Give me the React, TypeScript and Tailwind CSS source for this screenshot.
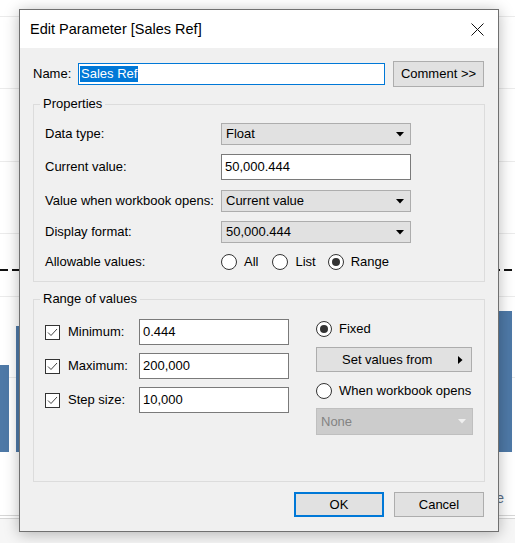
import type { ReactNode } from 'react'

const FONT = "font-['Liberation_Sans','Arial',sans-serif]"

function Radio({ checked }: { checked?: boolean }) {
  return (
    <span className="flex h-[16px] w-[16px] shrink-0 items-center justify-center rounded-full border border-[#333] bg-white">
      {checked && <span className="h-[8px] w-[8px] rounded-full bg-[#333]" />}
    </span>
  )
}

function Checkbox() {
  return (
    <span className="flex h-[15px] w-[15px] shrink-0 items-center justify-center border border-[#333] bg-white">
      <svg width="11" height="9" viewBox="0 0 11 9" fill="none">
        <path d="M1 4.5 L4 7.5 L10 1" stroke="#444" strokeWidth="1" />
      </svg>
    </span>
  )
}

function DownArrow({ color = '#000' }: { color?: string }) {
  return (
    <svg width="8" height="5" viewBox="0 0 8 5">
      <path d="M0 0 H8 L4 4.5 Z" fill={color} />
    </svg>
  )
}

function Select({ value }: { value: string }) {
  return (
    <div className="flex h-[22px] w-[190px] items-center justify-between border border-[#adadad] bg-[#e1e1e1] pl-[4px] pr-[6px]">
      <span>{value}</span>
      <DownArrow />
    </div>
  )
}

function TextBox({ value, width }: { value: string; width: string }) {
  return (
    <div className={`flex h-[26px] items-center border border-[#7a7a7a] bg-white pl-[3px] ${width}`}>
      {value}
    </div>
  )
}

function Group({ title, children, className = '' }: { title: string; children: ReactNode; className?: string }) {
  return (
    <fieldset className={`border border-[#dcdcdc] pl-[6px] pr-[6px] ${className}`}>
      <legend className="h-[16px] px-[3px] leading-[16px]">{title}</legend>
      {children}
    </fieldset>
  )
}

function PropRow({ label, children, h = 'h-[22px]', mt = '' }: { label: string; children: ReactNode; h?: string; mt?: string }) {
  return (
    <div className={`flex items-center pl-[5px] ${h} ${mt}`}>
      <span className="w-[176px] shrink-0">{label}</span>
      {children}
    </div>
  )
}

function RangeRow({ label, value, mt = '' }: { label: string; value: string; mt?: string }) {
  return (
    <div className={`flex h-[26px] items-center ${mt}`}>
      <Checkbox />
      <span className="ml-[8px] w-[71px]">{label}</span>
      <TextBox value={value} width="w-[150px]" />
    </div>
  )
}

function Background() {
  return (
    <div className="flex h-full flex-col">
      <div className="h-[17px] shrink-0 border-b border-[#ebebeb]" />
      <div className="h-[72px] shrink-0 border-b border-[#ebebeb]" />
      <div className="h-[73px] shrink-0 border-b border-[#ebebeb]" />
      <div className="h-[72px] shrink-0 border-b border-[#ebebeb]" />
      <div className="h-[35px] shrink-0" />
      <div className="h-[2px] shrink-0 bg-[repeating-linear-gradient(90deg,#111_0_8px,transparent_8px_12px)]" />
      <div className="h-[26px] shrink-0 border-b border-[#ebebeb]" />
      <div className="h-[81px] shrink-0 border-b border-[#ebebeb]" />
      <div className="h-[138px] shrink-0 border-b border-[#d6d6d6]" />
      <div className="h-[3px] shrink-0 border-b border-[#d6d6d6]" />
      <div className="flex-1 bg-[#f6f6f6]" />
    </div>
  )
}

export default function App() {
  return (
    <div className={`relative h-[543px] w-[515px] overflow-hidden bg-white text-[13px] text-black ${FONT}`}>
      <Background />

      {/* bars of the chart behind the dialog */}
      <div className="absolute left-0 top-[365px] h-[87px] w-[9px] bg-[#4e79a7]" />
      <div className="absolute left-[16px] top-[326px] h-[126px] w-[10px] bg-[#4e79a7]" />
      <div className="absolute left-[490px] top-[311px] h-[141px] w-[22px] bg-[#4e79a7]" />
      <span className="absolute left-[476px] top-[488px] text-[14px] text-[#5a6f8a]">Sale</span>

      <div className="absolute left-[19px] top-[9px] flex h-[523px] w-[480px] flex-col border border-[#707070] bg-[#f0f0f0] shadow-[0_2px_14px_rgba(0,0,0,0.28)]">
        <div className="flex h-[38px] shrink-0 items-center justify-between bg-white pl-[10px] pr-[14px] pt-[1px]">
          <span className="text-[14.5px]">Edit Parameter [Sales Ref]</span>
          <svg width="13" height="13" viewBox="0 0 13 13">
            <path d="M0.5 0.5 L12.5 12.5 M12.5 0.5 L0.5 12.5" stroke="#111" strokeWidth="1" />
          </svg>
        </div>

        <div className="flex flex-1 flex-col px-[13px] pt-[13px]">
          <div className="flex h-[26px] items-center">
            <span className="w-[45px] shrink-0">Name:</span>
            <div className="flex h-[22px] w-[307px] items-center border border-[#0078d7] bg-white pl-[1px]">
              <span className="bg-[#0078d7] px-[1px] leading-[16px] text-white">Sales Ref</span>
            </div>
            <button className="ml-[8px] flex h-[26px] w-[91px] items-center justify-center border border-[#adadad] bg-[#e1e1e1]">
              Comment &gt;&gt;
            </button>
          </div>

          <Group title="Properties" className="mt-[9px] pb-[11px]">
            <PropRow label="Data type:" mt="mt-[11px]">
              <Select value="Float" />
            </PropRow>
            <PropRow label="Current value:" h="h-[26px]" mt="mt-[9px]">
              <TextBox value="50,000.444" width="w-[190px]" />
            </PropRow>
            <PropRow label="Value when workbook opens:" mt="mt-[10px]">
              <Select value="Current value" />
            </PropRow>
            <PropRow label="Display format:" mt="mt-[9px]">
              <Select value="50,000.444" />
            </PropRow>
            <PropRow label="Allowable values:" h="h-[16px]" mt="mt-[11px]">
              <div className="flex items-center">
                <Radio />
                <span className="ml-[7px]">All</span>
                <span className="ml-[14px]"><Radio /></span>
                <span className="ml-[7px]">List</span>
                <span className="ml-[12px]"><Radio checked /></span>
                <span className="ml-[7px]">Range</span>
              </div>
            </PropRow>
          </Group>

          <Group title="Range of values" className="mt-[9px] h-[191px]">
            <div className="mt-[12px] flex pl-[5px]">
              <div className="flex flex-col">
                <RangeRow label="Minimum:" value="0.444" />
                <RangeRow label="Maximum:" value="200,000" mt="mt-[8px]" />
                <RangeRow label="Step size:" value="10,000" mt="mt-[8px]" />
              </div>
              <div className="ml-[27px] flex w-[157px] flex-col">
                <div className="flex h-[20px] items-center">
                  <Radio checked />
                  <span className="ml-[7px]">Fixed</span>
                </div>
                <div className="mt-[8px] flex h-[25px] w-[156px] items-center border border-[#adadad] bg-[#e1e1e1] pl-[25px] pr-[8px]">
                  <span className="flex-1">Set values from</span>
                  <svg width="5" height="8" viewBox="0 0 5 8">
                    <path d="M0 0 V8 L4.5 4 Z" fill="#000" />
                  </svg>
                </div>
                <div className="mt-[9px] flex h-[20px] items-center">
                  <Radio />
                  <span className="ml-[7px]">When workbook opens</span>
                </div>
                <div className="mt-[7px] flex h-[27px] w-[157px] items-center justify-between border border-[#bfbfbf] bg-[#cccccc] pl-[4px] pr-[6px] text-[#838383]">
                  <span>None</span>
                  <DownArrow color="#f0f0f0" />
                </div>
              </div>
            </div>
          </Group>

          <div className="mt-[10px] flex justify-end gap-[10px] pr-[1px]">
            <button className="flex h-[25px] w-[90px] items-center justify-center border-2 border-[#0078d7] bg-[#e1e1e1]">
              OK
            </button>
            <button className="flex h-[25px] w-[90px] items-center justify-center border border-[#adadad] bg-[#e1e1e1]">
              Cancel
            </button>
          </div>
        </div>
      </div>
    </div>
  )
}
